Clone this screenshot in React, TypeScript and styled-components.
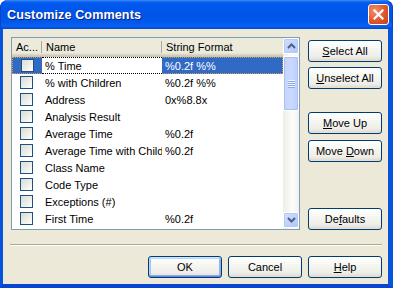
import React from "react";
import styled, { createGlobalStyle, css } from "styled-components";

const Global = createGlobalStyle`
  html, body { margin: 0; padding: 0; background: #ffffff; }
  body { font-family: "Liberation Sans", Arial, sans-serif; font-size: 11px; color: #000; }
  * { box-sizing: border-box; }
`;

const Window = styled.div`
  width: 393px;
  height: 288px;
  display: flex;
  flex-direction: column;
`;

const TitleBar = styled.div`
  height: 29px;
  flex: none;
  display: flex;
  align-items: center;
  padding: 2px 4px 0 7px;
  border-radius: 8px 8px 0 0;
  background: linear-gradient(
    to bottom,
    #3d8cf6 0px,
    #0a5ff0 2px,
    #0058ee 4px,
    #0055e8 14px,
    #0157ec 22px,
    #0a62f2 26px,
    #0047d4 29px
  );
  box-shadow: inset 1px 0 0 #0f3fc4, inset -1px 0 0 #0f3fc4;
`;

const Title = styled.div`
  flex: 1;
  color: #ffffff;
  font-weight: bold;
  font-size: 12.6px;
  letter-spacing: 0.1px;
  text-shadow: 1px 1px 0 #0a1f84;
  padding-bottom: 2px;
`;

const CloseButton = styled.div`
  width: 21px;
  height: 21px;
  margin-top: -2px;
  border: 1px solid #ffffff;
  border-radius: 3px;
  display: flex;
  align-items: center;
  justify-content: center;
  background: radial-gradient(circle at 30% 30%, #f0916c 0%, #e2562b 55%, #c0401a 100%);
`;

const Body = styled.div`
  flex: 1;
  display: flex;
  flex-direction: column;
  background: #ece9d8;
  border-left: 3px solid #0855dd;
  border-right: 5px solid #0855dd;
  border-bottom: 4px solid #0845d0;
  box-shadow: -1px 0 0 #0a2fc0, 1px 0 0 #0a2fc0;
  padding: 8px 6px 6px 8px;
`;

const MainRow = styled.div`
  display: flex;
  gap: 8px;
  height: 193px;
`;

const ListBox = styled.div`
  width: 289px;
  height: 193px;
  border: 1px solid #7f9db9;
  background: #ffffff;
  display: flex;
`;

const ListContent = styled.div`
  width: 271px;
  display: flex;
  flex-direction: column;
  overflow: hidden;
`;

const HeaderRow = styled.div`
  height: 19px;
  flex: none;
  display: flex;
  background: linear-gradient(to bottom, #ebeadb 0px, #ebeadb 15px, #e2decd 16px, #d6d2c2 17px, #cbc7b8 18px);
`;

const HeaderCell = styled.div<{ $w: number; $last?: boolean }>`
  width: ${(p) => p.$w}px;
  flex: none;
  position: relative;
  padding: 3px 0 0 4px;
  white-space: nowrap;
  overflow: hidden;
  text-overflow: ellipsis;
  ${(p) =>
    !p.$last &&
    css`
      &::after {
        content: "";
        position: absolute;
        right: 0;
        top: 3px;
        bottom: 4px;
        width: 1px;
        background: #aca899;
        box-shadow: 1px 0 0 #ffffff;
      }
    `}
`;

const Row = styled.div`
  height: 17px;
  flex: none;
  display: flex;
  align-items: stretch;
`;

const Cell = styled.div<{ $w: number; $sel?: boolean; $focus?: "left" | "mid" | "right" }>`
  width: ${(p) => p.$w}px;
  flex: none;
  display: flex;
  align-items: center;
  padding-left: 3px;
  white-space: nowrap;
  overflow: hidden;
  background: ${(p) => (p.$sel ? "#316ac5" : "transparent")};
  color: ${(p) => (p.$sel ? "#ffffff" : "#000000")};
  ${(p) =>
    p.$focus &&
    css`
      border-top: 1px dotted ${p.$sel ? "#d49a4a" : "#000000"};
      border-bottom: 1px dotted ${p.$sel ? "#d49a4a" : "#000000"};
    `}
  ${(p) =>
    p.$focus === "left" &&
    css`
      border-left: 1px dotted #d49a4a;
    `}
  ${(p) =>
    p.$focus === "right" &&
    css`
      border-right: 1px dotted #d49a4a;
    `}
`;

const CheckCell = styled(Cell)`
  padding-left: 8px;
`;

const CheckBox = styled.div`
  width: 13px;
  height: 13px;
  border: 1px solid #1c5180;
  background: linear-gradient(135deg, #dcdcd7 0%, #f0f0ea 60%, #ffffff 100%);
`;

const ScrollBar = styled.div`
  width: 16px;
  flex: none;
  display: flex;
  flex-direction: column;
  background: linear-gradient(to right, #eeede5 0%, #fdfdfa 60%, #f3f1ec 100%);
`;

const ScrollButton = styled.div`
  height: 16px;
  flex: none;
  margin: 0 0 1px 0;
  border: 1px solid #ffffff;
  border-radius: 2px;
  display: flex;
  align-items: center;
  justify-content: center;
  background: linear-gradient(135deg, #d2defd 0%, #bfd1fb 60%, #b1c6f8 100%);
  box-shadow: inset 0 0 0 1px #b6caf7;
`;

const Thumb = styled.div`
  height: 55px;
  flex: none;
  margin-top: 1px;
  border: 1px solid #ffffff;
  border-radius: 2px;
  background: linear-gradient(to right, #c5d5fc 0%, #cbd9fd 50%, #bccefb 100%);
  box-shadow: inset 0 0 0 1px #a9bff3;
  display: flex;
  align-items: center;
  justify-content: center;
`;

const Grip = styled.div`
  width: 7px;
  height: 8px;
  background: repeating-linear-gradient(to bottom, #eef4fe 0px, #eef4fe 1px, #8aa8f0 1px, #8aa8f0 2px);
`;

const Track = styled.div`
  flex: 1;
`;

const ButtonColumn = styled.div`
  width: 74px;
  display: flex;
  flex-direction: column;
  padding-top: 3px;
`;

const XPButton = styled.button<{ $gap?: number; $default?: boolean }>`
  width: 74px;
  height: 22px;
  flex: none;
  margin-top: ${(p) => p.$gap ?? 0}px;
  padding: 0;
  font-family: "Liberation Sans", Arial, sans-serif;
  font-size: 11px;
  color: #000000;
  border: 1px solid #003c74;
  border-radius: 3px;
  background: linear-gradient(to bottom, #ffffff 0%, #f6f6f2 40%, #eeede7 80%, #dcd7cb 100%);
  box-shadow: ${(p) =>
    p.$default
      ? "inset 0 1px 0 #cee7ff, inset 0 -1px 0 #6982ee, inset 1px 0 0 #bcd4f6, inset -1px 0 0 #89ade4, inset 0 2px 0 #bcd4f6, inset 0 -2px 0 #89ade4, inset 2px 0 0 #a8c4f0, inset -2px 0 0 #94b4ea"
      : "inset 0 -1px 0 #e3dfd4"};
  display: flex;
  align-items: center;
  justify-content: center;
  white-space: nowrap;
  u { text-decoration: underline; text-underline-offset: 1px; }
`;

const BottomButton = styled(XPButton)`
  margin-top: 0;
`;

const Separator = styled.div`
  margin: 14px 0 10px -1px;
  height: 2px;
  border-top: 1px solid #aca899;
  border-bottom: 1px solid #ffffff;
`;

const BottomRow = styled.div`
  display: flex;
  justify-content: flex-end;
  gap: 6px;
`;

const Chevron = ({ up }: { up?: boolean }) => (
  <svg width="9" height="6" viewBox="0 0 9 6">
    <path
      d={up ? "M1 5 L4.5 1.5 L8 5" : "M1 1 L4.5 4.5 L8 1"}
      fill="none"
      stroke="#4d6185"
      strokeWidth="2"
    />
  </svg>
);

const rows: [string, string][] = [
  ["% Time", "%0.2f %%"],
  ["% with Children", "%0.2f %%"],
  ["Address", "0x%8.8x"],
  ["Analysis Result", ""],
  ["Average Time", "%0.2f"],
  ["Average Time with Children", "%0.2f"],
  ["Class Name", ""],
  ["Code Type", ""],
  ["Exceptions (#)", ""],
  ["First Time", "%0.2f"],
];

export default function App() {
  return (
    <>
      <Global />
      <Window>
        <TitleBar>
          <Title>Customize Comments</Title>
          <CloseButton>
            <svg width="11" height="11" viewBox="0 0 11 11">
              <path d="M1.5 1.5 L9.5 9.5 M9.5 1.5 L1.5 9.5" stroke="#ffffff" strokeWidth="2.2" strokeLinecap="square" />
            </svg>
          </CloseButton>
        </TitleBar>
        <Body>
          <MainRow>
            <ListBox>
              <ListContent>
                <HeaderRow>
                  <HeaderCell $w={30}>Ac...</HeaderCell>
                  <HeaderCell $w={120}>Name</HeaderCell>
                  <HeaderCell $w={121} $last>
                    String Format
                  </HeaderCell>
                </HeaderRow>
                {rows.map(([name, fmt], i) => {
                  const sel = i === 0;
                  return (
                    <Row key={name}>
                      <CheckCell $w={30} $sel={sel} $focus={sel ? "left" : undefined}>
                        <CheckBox />
                      </CheckCell>
                      <Cell $w={120} $focus={sel ? "mid" : undefined}>
                        {name}
                      </Cell>
                      <Cell $w={121} $sel={sel} $focus={sel ? "right" : undefined}>
                        {fmt}
                      </Cell>
                    </Row>
                  );
                })}
              </ListContent>
              <ScrollBar>
                <ScrollButton>
                  <Chevron up />
                </ScrollButton>
                <Thumb>
                  <Grip />
                </Thumb>
                <Track />
                <ScrollButton>
                  <Chevron />
                </ScrollButton>
              </ScrollBar>
            </ListBox>
            <ButtonColumn>
              <XPButton>
                <span><u>S</u>elect All</span>
              </XPButton>
              <XPButton $gap={5}>
                <span><u>U</u>nselect All</span>
              </XPButton>
              <XPButton $gap={23}>
                <span><u>M</u>ove Up</span>
              </XPButton>
              <XPButton $gap={6}>
                <span>Move <u>D</u>own</span>
              </XPButton>
              <XPButton $gap={46}>
                <span>De<u>f</u>aults</span>
              </XPButton>
            </ButtonColumn>
          </MainRow>
          <Separator />
          <BottomRow>
            <BottomButton $default>OK</BottomButton>
            <BottomButton>Cancel</BottomButton>
            <BottomButton>
              <span><u>H</u>elp</span>
            </BottomButton>
          </BottomRow>
        </Body>
      </Window>
    </>
  );
}
